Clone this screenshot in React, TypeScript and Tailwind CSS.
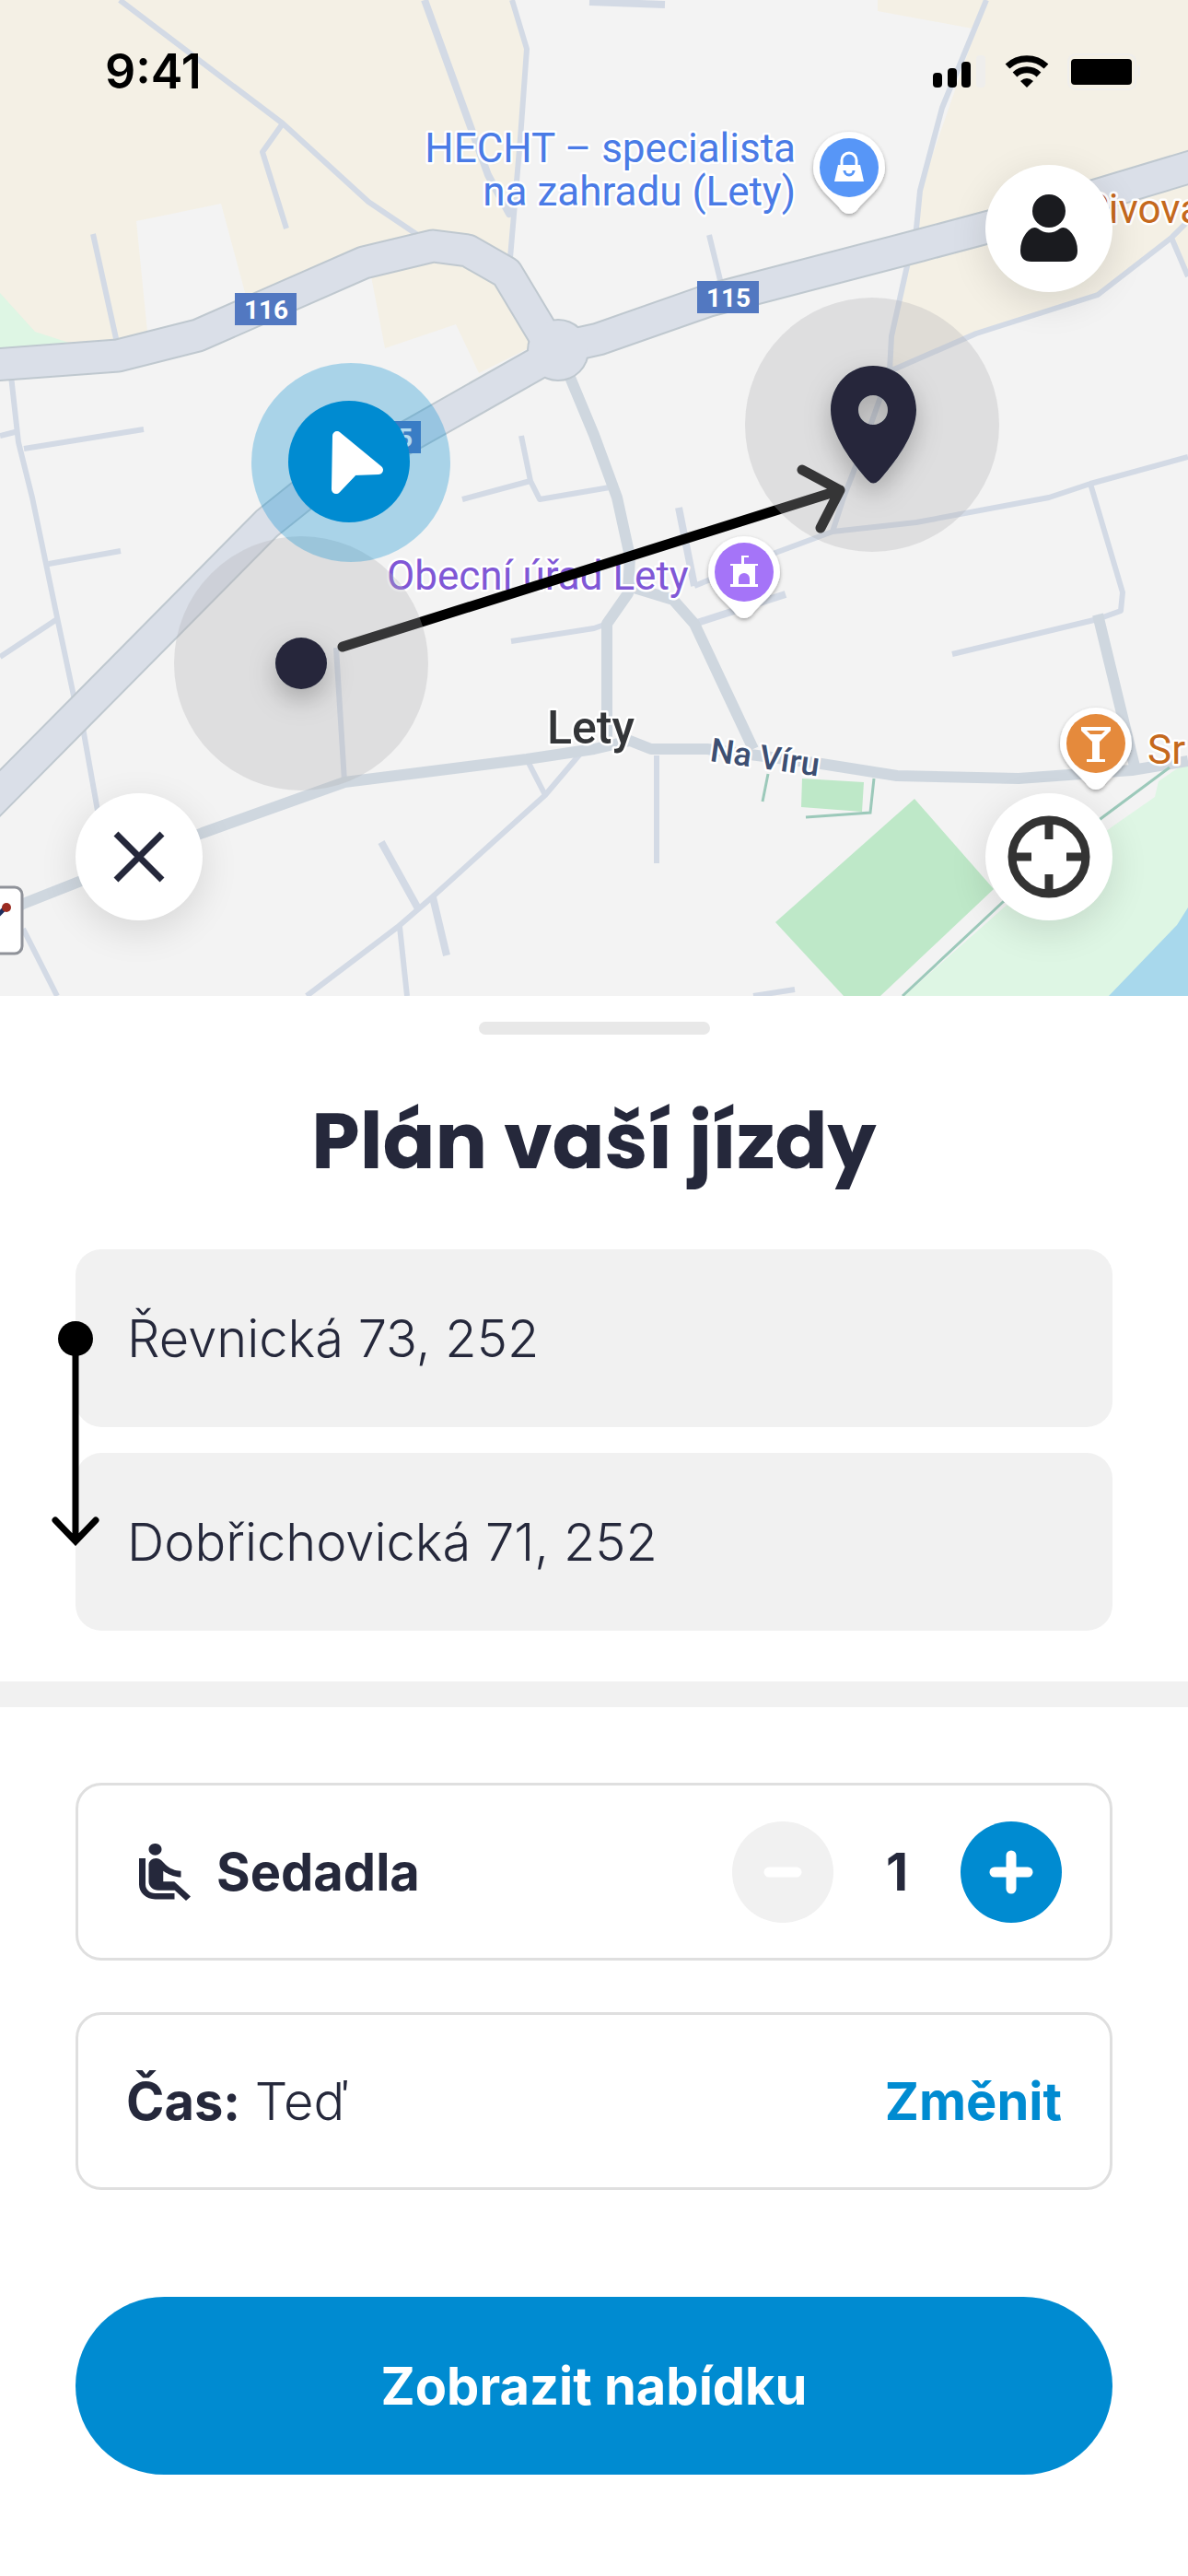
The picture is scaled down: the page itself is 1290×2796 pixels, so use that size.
import { useState } from 'react'
import type { ReactNode } from 'react'

const AREAS = [
  { fill: '#f4f0e5', d: 'M0 0H556L572 53L565 150L554 290L470 260L300 345L128 386L0 396Z' },
  { fill: '#f3f3f3', d: 'M148 240L240 221L272 340L161 370Z' },
  { fill: '#f4f0e5', d: 'M403 300L418 378L495 352L520 405L590 370L550 296L470 267Z' },
  { fill: '#def6e4', d: 'M0 318L38 360L75 372L0 382Z' },
  { fill: '#f4f0e5', d: 'M953 0H1290V300L1272 258L1192 320L1060 362L966 403L968 365L984 293L995 248L999 207L1071 0L1056 31L953 12Z' },
  { fill: '#def6e4', d: 'M1290 826L1258 848L1254 865L1208 897L1090 985L982 1081H1290Z' },
  { fill: '#a8d8ec', d: 'M1290 985L1278 1004L1204 1081H1290Z' },
  { fill: '#bee8c8', d: 'M993 867L1079 965L956 1081H916L842 1001Z' },
  { fill: '#bee8c8', d: 'M871 845L938 849L936 881L870 876Z' },
]

const LANES = [
  'M130 0L307 134L400 219L455 256',
  'M307 134L285 165L311 248',
  'M556 0L572 53L565 150L554 280',
  'M101 254L127 372',
  'M12 408L20 480L35 540L62 670L81 760',
  'M90 790L106 880',
  'M0 473L20 468',
  'M26 487L156 466',
  'M53 612L131 598',
  'M0 713L62 672',
  'M365 703L374 848',
  'M25 1008L62 1081',
  'M555 696L645 682L659 677',
  'M631 817L592 863L469 974L432 1006L333 1081',
  'M574 828L592 863',
  'M434 1006L442 1081',
  'M566 473L576 522L586 542L668 528',
  'M502 542L576 522',
  'M754 636L842 600L904 577L995 567L1139 540L1184 525L1290 496',
  'M1184 525L1219 643L1217 663L1192 672L1034 710',
  'M904 577L916 540L933 496L966 403L968 365L984 293L995 248L999 207L1023 117L1071 0',
  'M966 403L1060 362L1192 320L1272 258L1290 240',
  'M1272 258L1290 300',
  'M770 255L783 308',
  'M713 820V937',
  'M818 1081L863 1074',
]

const STREETS = [
  'M461 0L530 190L553 232L556 226',
  'M414 914L455 988',
  'M470 974L485 1037',
  'M754 677L853 645',
  'M737 551L754 636',
  'M640 2L722 5',
]

const COLLECTORS = [
  'M0 993L25 981L220 904L374 849L572 824L645 813L684 804L707 813H768L892 829L974 842L1106 845L1229 836L1290 826',
  'M615 400L645 472L670 540L684 604L682 644L659 677V810',
  'M682 636L731 651L754 677L818 813',
  'M1192 667L1233 836',
]

const MAIN_ROADS =
  'M-20 397L128 386L215 364L395 285L470 267L508 272L550 296L592 366M605 378L650 368L770 326L1000 266L1075 246L1190 212L1310 176M600 385L450 470L335 532L290 568L87 773L-20 881'

function Poi({ x, y, color, children }: { x: number; y: number; color: string; children: ReactNode }) {
  return (
    <g transform={`translate(${x} ${y})`}>
      <path
        d="M0 50C-5 50 -8 47 -11 43C-18 34 -39 20 -39 0A39 39 0 0 1 39 0C39 20 18 34 11 43C8 47 5 50 0 50Z"
        fill="#fff"
        filter="url(#poi-shadow)"
      />
      <circle r="32" fill={color} />
      {children}
    </g>
  )
}

function RoadSign({ x, y, label }: { x: number; y: number; label: string }) {
  return (
    <g>
      <rect x={x} y={y} width="67" height="35" fill="#5278c1" />
      <text x={x + 34} y={y + 28} textAnchor="middle" fontSize="28" fontWeight="700" fill="#fff">
        {label}
      </text>
    </g>
  )
}

function RideMap() {
  return (
    <svg viewBox="0 0 1290 1081" className="block w-full font-[Roboto,sans-serif]" role="img" aria-label="Mapa trasy">
      <defs>
        <filter id="poi-shadow" x="-30%" y="-30%" width="160%" height="160%">
          <feDropShadow dx="0" dy="2" stdDeviation="2" floodOpacity="0.35" />
        </filter>
        <filter id="pin-shadow" x="-80%" y="-80%" width="260%" height="260%">
          <feDropShadow dx="0" dy="11" stdDeviation="14" floodOpacity="0.25" />
        </filter>
      </defs>

      <rect width="1290" height="1081" fill="#f3f3f3" />
      {AREAS.map((area) => (
        <path key={area.d} d={area.d} fill={area.fill} />
      ))}

      <g fill="none" stroke="#d3dae5" strokeLinejoin="round">
        <path d={LANES.join('')} strokeWidth="6" />
        <path d={STREETS.join('')} strokeWidth="8" />
        <path d={COLLECTORS.join('')} stroke="#cfd7df" strokeWidth="12" />
      </g>
      <g fill="none" stroke="#9cc9ba" strokeWidth="3">
        <path d="M980 1081L1089 979L1196 888L1270 833" />
        <path d="M834 840L828 870M949 845L945 882L875 887" />
      </g>

      <path d={MAIN_ROADS} fill="none" stroke="#bfc8cf" strokeWidth="37" strokeLinejoin="round" />
      <circle cx="606" cy="380" r="34" fill="#bfc8cf" />
      <path d={MAIN_ROADS} fill="none" stroke="#dadfe8" strokeWidth="33" strokeLinejoin="round" />
      <circle cx="606" cy="380" r="32" fill="#dadfe8" />

      <RoadSign x={255} y={318} label="116" />
      <RoadSign x={757} y={305} label="115" />
      <RoadSign x={390} y={457} label="115" />

      <g stroke="#fff" strokeWidth="5" strokeLinejoin="round" className="[paint-order:stroke]">
        <g fontSize="44" fill="#4a7be6">
          <text x="864" y="176" textAnchor="end">HECHT – specialista</text>
          <text x="864" y="223" textAnchor="end">na zahradu (Lety)</text>
        </g>
        <text x="420" y="640" fontSize="44" fill="#8057d6">Obecní úřad Lety</text>
        <text x="594" y="807" fontSize="50" fontWeight="500" fill="#333538">Lety</text>
        <text x="770" y="826" fontSize="36" fontWeight="500" fill="#3d4f72" transform="rotate(8 770 826)">Na Víru</text>
        <g fontSize="44" fill="#c5691d">
          <text x="1176" y="242">Pivova</text>
          <text x="1246" y="829">Sr</text>
        </g>
      </g>

      <Poi x={922} y={182} color="#5796f7">
        <path d="M-12 -3H12L16 15H-16Z" fill="#fff" />
        <path d="M-8 -2V-8A8 8 0 0 1 8 -8V-2" fill="none" stroke="#fff" strokeWidth="3" />
        <path d="M-5 3A5 5 0 0 0 5 3" fill="none" stroke="#5796f7" strokeWidth="3" />
      </Poi>
      <Poi x={808} y={621} color="#a574f8">
        <path d="M-15 -9H15V-7H12V13H15V16H-15V13H-12V-7H-15ZM-3 -18H5V-16H0V-9H-3Z" fill="#fff" />
        <path d="M-6 13V7A6 6 0 0 1 6 7V13Z" fill="#a574f8" />
      </Poi>
      <Poi x={1190} y={807} color="#e58a3c">
        <path d="M-16 -18H16V-14L4 -2V17H10V20H-10V17H-4V-2L-16 -14Z" fill="#fff" />
        <path d="M-10 -14H10L6 -10H-6Z" fill="#e58a3c" />
      </Poi>

      <rect x="-40" y="963" width="64" height="72" rx="8" fill="#fff" stroke="#8f9299" strokeWidth="3" />
      <path d="M-2 993L6 985" stroke="#1c2d5e" strokeWidth="5" />
      <circle cx="7" cy="985" r="5" fill="#9b2b21" />

      <path
        d="M372 702L912 532M871 510L912 532L891 573"
        fill="none"
        stroke="#000"
        strokeWidth="11"
        strokeLinecap="round"
        strokeLinejoin="round"
      />
      <g fill="#aeb0b4" fillOpacity="0.3">
        <circle cx="327" cy="720" r="138" />
        <circle cx="947" cy="461" r="138" />
      </g>
      <circle cx="327" cy="720" r="28" fill="#25283b" filter="url(#pin-shadow)" />
      <path
        d="M948 397C922 397 902 418 902 445C902 472 926 503 942 521Q948 528 955 521C971 503 995 472 995 445C995 418 975 397 948 397ZM948 429A16 16 0 0 1 948 461A16 16 0 0 1 948 429Z"
        fill="#25283b"
        fillRule="evenodd"
        filter="url(#pin-shadow)"
      />

      <circle cx="381" cy="502" r="108" fill="#008bd1" fillOpacity="0.3" />
      <circle cx="379" cy="501" r="66" fill="#008bd1" />
      <path
        d="M366 473L411 510L384 511L365 531Z"
        fill="#fff"
        stroke="#fff"
        strokeWidth="10"
        strokeLinejoin="round"
      />
    </svg>
  )
}

function StatusBar() {
  return (
    <div className="absolute inset-x-0 top-0 flex items-center justify-between pt-[48px] pr-[51px] pl-[114px]">
      <span className="text-[52px] leading-[60px] font-semibold text-black">9:41</span>
      <div className="flex items-center gap-[20px]">
        <svg viewBox="0 0 58 36" className="h-[36px] w-[58px]">
          <rect y="19" width="10" height="16" rx="4" />
          <rect x="16" y="14" width="10" height="21" rx="4" />
          <rect x="31" y="7" width="10" height="28" rx="4" />
          <rect x="47" width="10" height="35" rx="4" fill="#efeeec" />
        </svg>
        <svg viewBox="0 0 48 36" className="h-[36px] w-[48px]" fill="none" stroke="#000">
          <path d="M3 12A31 31 0 0 1 45 12" strokeWidth="7" />
          <path d="M11 21A19 19 0 0 1 37 21" strokeWidth="7" />
          <path d="M17 28Q24 22 31 28L24 35Z" fill="#000" stroke="none" />
        </svg>
        <svg viewBox="0 0 80 40" className="h-[40px] w-[80px]">
          <rect x="1" y="1" width="73" height="38" rx="8" fill="none" stroke="#efeeec" strokeWidth="2" />
          <rect x="4" y="6" width="66" height="28" rx="4" />
          <rect x="76" y="13" width="3" height="13" rx="2" fill="#efeeec" />
        </svg>
      </div>
    </div>
  )
}

function MapButton({ label, children }: { label: string; children: ReactNode }) {
  return (
    <button
      type="button"
      aria-label={label}
      className="flex size-[138px] items-center justify-center rounded-full bg-white shadow-[0_11px_42px_rgba(0,0,0,0.12)]"
    >
      {children}
    </button>
  )
}

function SeatIcon() {
  return (
    <svg viewBox="4 2 16 19.5" preserveAspectRatio="none" className="mx-[14px] h-[62px] w-[56px]" fill="currentColor">
      <path d="M7.59 5.41c-.78-.78-.78-2.05 0-2.83.78-.78 2.05-.78 2.83 0 .78.78.78 2.05 0 2.83-.79.79-2.05.79-2.83 0zM6 16V7H4v9c0 2.76 2.24 5 5 5h6v-2H9c-1.66 0-3-1.34-3-3zm14 4.07L14.93 15H11.5v-3.68c1.4 1.15 3.6 2.16 5.5 2.16v-2.16c-1.66.02-3.61-.87-4.67-2.04l-1.4-1.55c-.19-.21-.43-.38-.69-.5-.29-.14-.62-.23-.96-.23h-.03C8.01 7 7 8.01 7 9.25V15c0 1.66 1.34 3 3 3h5.07l3.5 3.5L20 20.07z" />
    </svg>
  )
}

export default function App() {
  const [from, setFrom] = useState('Řevnická 73, 252')
  const [to, setTo] = useState('Dobřichovická 71, 252')
  const [seats, setSeats] = useState(1)

  return (
    <main className="min-h-screen bg-white font-[Inter,sans-serif] text-[#25283b]">
      <section className="relative overflow-hidden">
        <RideMap />
        <StatusBar />
        <div className="absolute top-[179px] right-[82px]">
          <MapButton label="Profil">
            <svg viewBox="0 0 64 74" className="h-[74px] w-[64px]" fill="#1a1b1f">
              <circle cx="32" cy="18" r="18" />
              <path d="M10 39Q15 34 20 37Q32 46 44 37Q49 34 54 39Q63 48 63 61Q63 73 51 73H13Q1 73 1 61Q1 48 10 39Z" />
            </svg>
          </MapButton>
        </div>
        <div className="absolute inset-x-[82px] bottom-[82px] flex justify-between">
          <MapButton label="Zavřít">
            <svg viewBox="0 0 56 56" className="size-[56px]" stroke="#25283b" strokeWidth="7">
              <path d="M3 3L53 53M53 3L3 53" />
            </svg>
          </MapButton>
          <MapButton label="Moje poloha">
            <svg viewBox="0 0 90 90" className="size-[90px]" fill="none" stroke="#333" strokeWidth="9">
              <circle cx="45" cy="45" r="40" />
              <path d="M45 5V26M45 64V85M5 45H26M64 45H85" />
            </svg>
          </MapButton>
        </div>
      </section>

      <section className="flex flex-col items-center px-[82px] pt-[28px] pb-[55px]">
        <div className="h-[14px] w-[251px] rounded-full bg-[#e8e8e8]" />
        <h1 className="mt-[56px] mb-[57px] font-[Poppins,Inter,sans-serif] text-[84px] leading-[120px] font-bold">
          Plán vaší jízdy
        </h1>
        <div className="relative flex w-full flex-col gap-[28px]">
          <input
            aria-label="Odkud"
            value={from}
            onChange={(e) => setFrom(e.target.value)}
            className="h-[193px] w-full rounded-[28px] bg-[#f1f1f1] px-[56px] text-[56px] font-light"
          />
          <input
            aria-label="Kam"
            value={to}
            onChange={(e) => setTo(e.target.value)}
            className="h-[193px] w-full rounded-[28px] bg-[#f1f1f1] px-[56px] text-[56px] font-light"
          />
          <svg
            viewBox="0 0 52 244"
            className="pointer-events-none absolute top-[78px] left-[-26px] h-[244px] w-[52px]"
            fill="none"
            stroke="#000"
            strokeWidth="7"
            strokeLinecap="round"
          >
            <circle cx="26" cy="19" r="19" fill="#000" stroke="none" />
            <path d="M26 19V238M4 216L26 239L48 216" />
          </svg>
        </div>
      </section>

      <div className="h-[28px] bg-[#f1f1f1]" />

      <section className="flex flex-col gap-[56px] px-[82px] pt-[82px] pb-[110px] text-[56px]">
        <div className="flex h-[193px] items-center justify-between rounded-[28px] border-[3px] border-[#dfdfdf] px-[52px]">
          <div className="flex items-center gap-[14px] font-bold">
            <SeatIcon />
            Sedadla
          </div>
          <div className="flex items-center font-bold">
            <button
              type="button"
              aria-label="Ubrat sedadlo"
              disabled={seats === 1}
              onClick={() => setSeats(seats - 1)}
              className="flex size-[110px] items-center justify-center rounded-full bg-[#008bd1] disabled:bg-[#f1f1f1]"
            >
              <svg viewBox="0 0 48 48" className="size-[48px]" stroke="#fff" strokeWidth="11" strokeLinecap="round">
                <path d="M9 24H39" />
              </svg>
            </button>
            <span className="w-[138px] text-center">{seats}</span>
            <button
              type="button"
              aria-label="Přidat sedadlo"
              onClick={() => setSeats(seats + 1)}
              className="flex size-[110px] items-center justify-center rounded-full bg-[#008bd1]"
            >
              <svg viewBox="0 0 48 48" className="size-[48px]" stroke="#fff" strokeWidth="11" strokeLinecap="round">
                <path d="M6 24H42M24 6V42" />
              </svg>
            </button>
          </div>
        </div>

        <div className="flex h-[193px] items-center justify-between rounded-[28px] border-[3px] border-[#dfdfdf] px-[52px]">
          <p className="font-light">
            <span className="font-bold">Čas:</span> Teď
          </p>
          <button type="button" className="font-bold text-[#008bd1]">
            Změnit
          </button>
        </div>

        <button type="button" className="mt-[60px] h-[193px] rounded-full bg-[#008bd1] font-bold text-white">
          Zobrazit nabídku
        </button>
      </section>
    </main>
  )
}
